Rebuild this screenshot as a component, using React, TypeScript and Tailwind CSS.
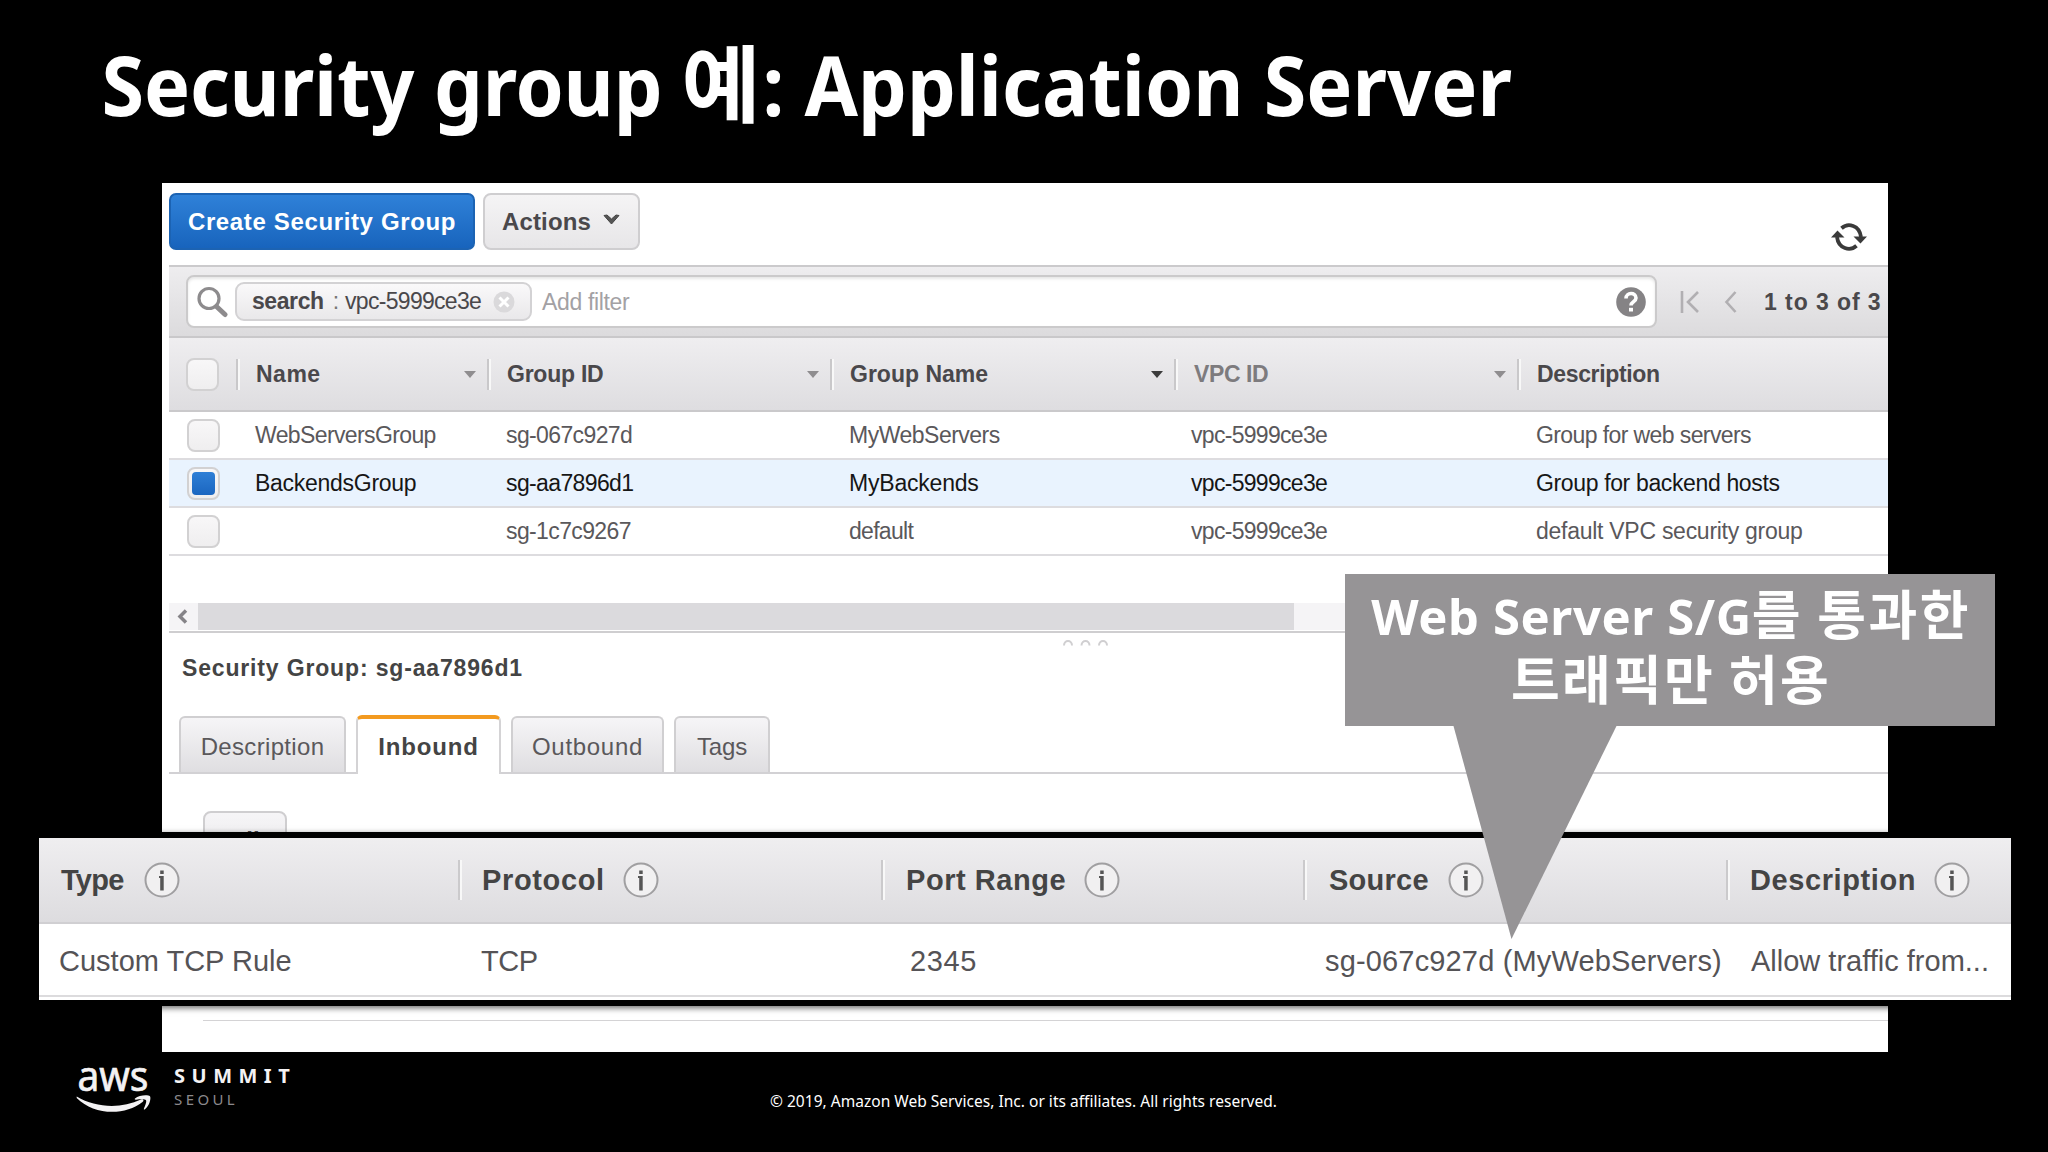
import clsx from "clsx";

const COLUMNS = "grid grid-cols-[67px_251px_343px_344px_343px_1fr] items-center";

const GROUPS = [
  {
    name: "WebServersGroup",
    nameTracking: "tracking-[-0.62px]",
    id: "sg-067c927d",
    groupName: "MyWebServers",
    groupTracking: "tracking-[-0.5px]",
    description: "Group for web servers",
    descTracking: "tracking-[-0.6px]",
    selected: false,
  },
  {
    name: "BackendsGroup",
    nameTracking: "tracking-[-0.28px]",
    id: "sg-aa7896d1",
    groupName: "MyBackends",
    groupTracking: "tracking-[-0.2px]",
    description: "Group for backend hosts",
    descTracking: "tracking-[-0.36px]",
    selected: true,
  },
  {
    name: "",
    nameTracking: "",
    id: "sg-1c7c9267",
    groupName: "default",
    groupTracking: "tracking-[-0.7px]",
    description: "default VPC security group",
    descTracking: "tracking-[-0.27px]",
    selected: false,
  },
];

const RULE_HEADS = [
  { label: "Type", className: "gap-[20px] pl-[22px] tracking-[-0.7px]" },
  { label: "Protocol", className: "gap-[18px] pl-[22px] tracking-[0.65px]" },
  { label: "Port Range", className: "gap-[18px] pl-[23px] tracking-[0.55px]" },
  { label: "Source", className: "gap-[19px] pl-[24px] tracking-[0.25px]" },
  { label: "Description", className: "gap-[18px] pl-[22px] tracking-[0.6px]" },
];

function SearchIcon() {
  return (
    <svg className="h-8 w-8" viewBox="0 0 32 32" fill="none" stroke="#8d8b8d">
      <circle cx="13" cy="12.5" r="10" strokeWidth="3.2" />
      <path d="M20.5 20.5l8.5 8" strokeWidth="5" strokeLinecap="round" />
    </svg>
  );
}

function RefreshIcon() {
  return (
    <svg className="h-7 w-9" viewBox="0 0 36 28" fill="none" stroke="#3a3a3a">
      <path d="M10.5 5.2C17 -0.5 28.5 2 30 14" strokeWidth="3.8" />
      <path d="M25.5 22.8C19 28.5 7.5 26 6 14" strokeWidth="3.8" />
      <path d="M22.5 13.5H36L29.5 20.5zM0 14.5H13.5L6.5 7.5z" fill="#3a3a3a" stroke="none" />
    </svg>
  );
}

function InfoIcon() {
  return (
    <svg className="h-9 w-9 shrink-0" viewBox="0 0 36 36">
      <circle cx="18" cy="18" r="16.5" fill="#f1f0f1" stroke="#a09fa1" strokeWidth="2" />
      <path d="M15 14h4.7v14.5h-3.5V16H15zM16.2 8.5h3.5V12h-3.5z" fill="#555" />
    </svg>
  );
}

function SortArrow({ active }: { active?: boolean }) {
  return (
    <svg className="mr-[11px] ml-auto h-[7px] w-3" viewBox="0 0 12 7">
      <path d="M0 0h12L6 7z" fill={active ? "#3c3c3c" : "#8f8d8f"} />
    </svg>
  );
}

function Checkbox({ checked }: { checked?: boolean }) {
  return (
    <span className="flex h-[33px] w-[33px] items-center justify-center rounded-[8px] border-2 border-[#d2d1d2] bg-linear-to-b from-[#f8f7f8] to-[#efeeef]">
      {checked && <span className="h-[23px] w-[23px] rounded-[4px] bg-linear-to-b from-[#2f7fd6] to-[#1b66c0]" />}
    </span>
  );
}

function HeadCell({ label, className, active, last }: { label: string; className?: string; active?: boolean; last?: boolean }) {
  return (
    <div className="mt-px flex h-[31px] items-center border-l-2 border-[#c9c8ca] pl-[18px] shadow-[inset_2px_0_0_#f8f8f8]">
      <span className={className}>{label}</span>
      {!last && <SortArrow active={active} />}
    </div>
  );
}

function Toolbar() {
  return (
    <div className="flex h-[82px] items-start pt-2.5">
      <button className="h-[57px] w-[306px] rounded-[7px] border-2 border-[#1c63b3] bg-linear-to-b from-[#2f81d8] to-[#1864bd] pt-px text-2xl font-bold tracking-[0.64px] text-white">
        Create Security Group
      </button>
      <button className="ml-2 flex h-[57px] w-[157px] items-center rounded-[8px] border-2 border-[#cfced0] bg-linear-to-b from-[#f5f4f5] to-[#e7e6e8] pt-px pl-[17px] text-2xl font-bold tracking-[0.15px]">
        Actions
        <svg className="-mt-1 ml-3 h-3 w-[17px]" viewBox="0 0 17 12">
          <path d="M1 1.5L8.500 10 16 1.500l-3-.5-4.500 4L4 1z" fill="#555" stroke="#444" />
        </svg>
      </button>
      <div className="mt-[30px] mr-[21px] ml-auto">
        <RefreshIcon />
      </div>
    </div>
  );
}

function FilterBar() {
  return (
    <div className="flex h-[73px] items-center border-y-2 border-t-[#cbcacc] border-b-[#c9c8ca] bg-linear-to-b from-[#eeedef] to-[#dcdbdd] pl-[17px]">
      <div className="flex h-[53px] w-[1471px] items-center rounded-[8px] border-2 border-[#cbcacb] bg-white pl-[8px] shadow-[inset_0_2px_3px_#e6e6e6]">
        <SearchIcon />
        <div className="ml-[7px] flex h-[39px] w-[297px] items-center rounded-[9px] border-2 border-[#d3d2d4] bg-linear-to-b from-[#faf9fa] to-[#e9e8ea] pl-[15px]">
          <b className="tracking-[-0.42px]">search</b>
          <span className="ml-[9px] text-[#777]">:</span>
          <span className="ml-[6px] tracking-[-0.7px]">vpc-5999ce3e</span>
          <svg className="ml-[12px] h-[22px] w-[22px]" viewBox="0 0 22 22">
            <circle cx="11" cy="11" r="10.5" fill="#dad9db" />
            <path d="M6.5 6.5l9 9m0-9l-9 9" stroke="#fff" strokeWidth="3" />
          </svg>
        </div>
        <span className="mt-0.5 ml-2.5 tracking-[-0.35px] text-[#a3a1a4]">Add filter</span>
        <svg className="mr-[9px] ml-auto h-[30px] w-[30px]" viewBox="0 0 30 30" fill="none">
          <circle cx="15" cy="15" r="14.8" fill="#858385" />
          <path d="M10 11.5C10 5 20 5 20 11c0 4-5 3.5-5 7.5" stroke="#fff" strokeWidth="3.6" />
          <path d="M13 20.8h4v3.7h-4z" fill="#fff" />
        </svg>
      </div>
      <svg className="ml-[23px] h-[22px] w-[58px]" viewBox="0 0 58 22" fill="none" stroke="#b1afb2" strokeWidth="2.6">
        <path d="M2 0v22M18 1L8 11l10 10M55.5 1l-9 10 9 10" />
      </svg>
      <b className="mt-px ml-[26px] whitespace-nowrap tracking-[0.93px]">1 to 3 of 3</b>
    </div>
  );
}

function GroupTable() {
  return (
    <>
      <div className={clsx(COLUMNS, "h-[74px] border-b-2 border-[#cac9cb] bg-linear-to-b from-[#efeef0] to-[#dedde0] font-bold")}>
        <div className="pl-[17px]">
          <Checkbox />
        </div>
        <HeadCell label="Name" className="tracking-[0.5px]" />
        <HeadCell label="Group ID" className="tracking-[-0.25px]" />
        <HeadCell label="Group Name" active />
        <HeadCell label="VPC ID" className="tracking-[-0.4px] text-[#7d7b7e]" />
        <HeadCell label="Description" className="tracking-[-0.35px]" last />
      </div>
      {GROUPS.map((g) => (
        <div
          key={g.id}
          className={clsx(
            COLUMNS,
            "h-12 border-b-2 border-[#dddcdf] whitespace-nowrap",
            g.selected ? "bg-[#e9f3fe] text-[#161616]" : "bg-white text-[#5a585b]",
          )}
        >
          <div className="pl-[18px]">
            <Checkbox checked={g.selected} />
          </div>
          <span className={clsx("pl-[19px]", g.nameTracking)}>{g.name}</span>
          <span className="pl-[19px] tracking-[-0.62px]">{g.id}</span>
          <span className={clsx("pl-[19px]", g.groupTracking)}>{g.groupName}</span>
          <span className="pl-[17px] tracking-[-0.7px]">vpc-5999ce3e</span>
          <span className={clsx("pl-[19px]", g.descTracking)}>{g.description}</span>
        </div>
      ))}
    </>
  );
}

function Tab({ label, className, active }: { label: string; className: string; active?: boolean }) {
  return (
    <div
      className={clsx(
        "flex items-center justify-center rounded-t-[6px] border-x-2 text-2xl",
        active
          ? "-mb-0.5 h-[59px] border-t-4 border-x-[#d4d3d5] border-t-[#f39a1f] bg-white font-bold text-[#444]"
          : "h-[56px] border-t-2 border-[#d0cfd1] bg-linear-to-b from-[#f6f5f7] to-[#dfdee1] pt-[3px] text-[#5a585b]",
        className,
      )}
    >
      {label}
    </div>
  );
}

function Details() {
  return (
    <>
      <div className="mt-[47px] flex h-[27px] bg-[#f5f4f6]">
        <svg className="h-[27px] w-[29px]" viewBox="0 0 29 27" fill="none">
          <path d="M17 7.5l-6 6 6 6" stroke="#858387" strokeWidth="3.5" />
        </svg>
        <div className="w-[1096px] bg-[#dbdadd]" />
      </div>
      <div className="mt-px h-0.5 bg-[#cfced0]" />
      <svg className="mt-[7px] ml-[894px] h-[6px] w-[46px]" viewBox="0 0 46 6" fill="none" stroke="#d0cfd1" strokeWidth="2">
        <path d="M1 5.500c0-6 8-6 8 0M18.500 5.500c0-6 8-6 8 0M36 5.500c0-6 8-6 8 0" />
      </svg>
      <h2 className="mt-[5px] pl-[13px] leading-[34px] font-bold tracking-[0.84px] text-[#444]">
        Security Group: sg-aa7896d1
      </h2>
      <div className="mt-[30px] flex h-[59px] items-end gap-2.5 border-b-2 border-[#d2d1d4] pl-[10px]">
        <Tab label="Description" className="w-[167px] tracking-[0.33px]" />
        <Tab label="Inbound" className="w-[145px] tracking-[0.84px]" active />
        <Tab label="Outbound" className="w-[153px] tracking-[0.7px]" />
        <Tab label="Tags" className="w-[96px] tracking-[-0.2px]" />
      </div>
      <button className="mt-[37px] ml-[34px] h-[56px] w-[84px] rounded-[8px] border-2 border-[#cfced0] bg-linear-to-b from-[#f6f5f7] to-[#e7e6e8] pt-[3px] text-2xl font-bold">
        Edit
      </button>
      <div className="mt-[153px] ml-[34px] h-px bg-[#d4d3d5]" />
    </>
  );
}

function RuleTable() {
  return (
    <div className="absolute top-[832px] left-[33px] w-[1984px] border-6 border-black text-[29px] shadow-[0_2px_6px_rgba(0,0,0,0.6)]">
      <div className="grid h-[86px] grid-cols-[419px_423px_422px_423px_1fr] items-center border-b-2 border-[#d0cfd2] bg-linear-to-b from-[#efeef0] to-[#dddcdf] font-bold text-[#444]">
        {RULE_HEADS.map(({ label, className }, i) => (
          <div
            key={label}
            className={clsx(
              "flex h-[40px] items-center whitespace-nowrap",
              i > 0 && "border-l-2 border-[#cbcacc] shadow-[inset_2px_0_0_#f8f8f8]",
              className,
            )}
          >
            <span className="mt-0.5">{label}</span>
            <InfoIcon />
          </div>
        ))}
      </div>
      <div className="grid h-[73px] grid-cols-[419px_423px_422px_423px_1fr] items-center border-b-2 border-[#dcdbdd] bg-white pt-1 whitespace-nowrap text-[#555356]">
        <span className="pl-[20px]">Custom TCP Rule</span>
        <span className="pl-[23px] tracking-[-0.5px]">TCP</span>
        <span className="pl-[29px] tracking-[0.6px]">2345</span>
        <span className="pl-[22px] tracking-[0.16px]">sg-067c927d (MyWebServers)</span>
        <span className="pl-[25px]">Allow traffic from...</span>
      </div>
      <div className="h-[3px] bg-white" />
    </div>
  );
}

function Callout() {
  return (
    <div className="absolute top-[574px] left-[1345px] w-[650px]">
      <div className="h-[152px] bg-[#969496] pt-2 pl-0.5 text-center font-['Noto_Sans','Noto_Sans_CJK_KR',sans-serif] text-[49px] leading-[61px] font-bold whitespace-nowrap text-white">
        <p>
          <span className="tracking-[0.6px]">Web Server S/G</span>
          <span className="font-['Noto_Sans_CJK_KR',sans-serif] text-[53px] tracking-[2.4px]">를 통과한</span>
        </p>
        <p className="font-['Noto_Sans_CJK_KR',sans-serif] text-[53px] tracking-[2.2px]">트래픽만 허용</p>
      </div>
      <svg className="ml-[108px] block h-[213px] w-[164px]" viewBox="0 0 164 213">
        <path d="M0.5 0H163.5L58.5 213z" fill="#969496" />
      </svg>
    </div>
  );
}

function AwsLogo() {
  return (
    <svg className="h-[54px] w-[76px]" viewBox="0 0 76 54" fill="#f4f2f4">
      <text x="1.5" y="31" fontFamily="Noto Sans, sans-serif" fontSize="42" textLength="71" lengthAdjust="spacingAndGlyphs" stroke="#f4f2f4" strokeWidth="0.7">
        aws
      </text>
      <path d="M0.7 36.5C20 48 45 49 65 39.5c2-1 3.5 1 1.5 2.5C49 56 18 55.5 0.7 38z" />
      <path d="M59 38.5c4-3.5 13-4 15-2.2 1.3 2-.5 9.5-5 13-.8.5-1.5.2-1-.9 1.2-2.8 2.8-7 2-8.200-1-1.300-6-.9-10-.5-1.200.1-1.800-.6-1-1.200z" />
    </svg>
  );
}

export default function App() {
  return (
    <div className="relative flex h-[1152px] w-[2048px] flex-col overflow-hidden bg-black font-['Liberation_Sans',Arial,sans-serif]">
      <h1 className="h-[183px] origin-left scale-x-[0.932] pt-6 pl-[109px] font-['Noto_Sans','Noto_Sans_CJK_KR',sans-serif] text-[83px] leading-[120px] font-bold whitespace-nowrap text-white">
        <span className="tracking-[-0.25px]">Security group </span>
        <span className="mr-[6px] ml-[3px] inline-block scale-x-[1.1] font-['Noto_Sans_CJK_KR',sans-serif] text-[84px] leading-none">예</span>
        : Application Server
      </h1>

      <main className="ml-[162px] h-[869px] w-[1726px] shrink-0 overflow-hidden bg-white pl-[7px] text-[23px] text-[#4a484b]">
        <Toolbar />
        <FilterBar />
        <GroupTable />
        <Details />
      </main>

      <footer className="flex items-start pt-2 pl-[76px] font-['Noto_Sans',sans-serif] text-white">
        <AwsLogo />
        <div className="ml-[22px] w-[596px] pt-1">
          <p className="text-[20px] leading-6 font-bold tracking-[6.5px] text-[#f4f2f4]">SUMMIT</p>
          <p className="mt-px text-[15px] leading-5 tracking-[3.4px] text-[#8b898c]">SEOUL</p>
        </div>
        <p className="pt-[31px] text-[15.5px] leading-5 tracking-[0.025px]">
          © 2019, Amazon Web Services, Inc. or its affiliates. All rights reserved.
        </p>
      </footer>

      <RuleTable />
      <Callout />
    </div>
  );
}
